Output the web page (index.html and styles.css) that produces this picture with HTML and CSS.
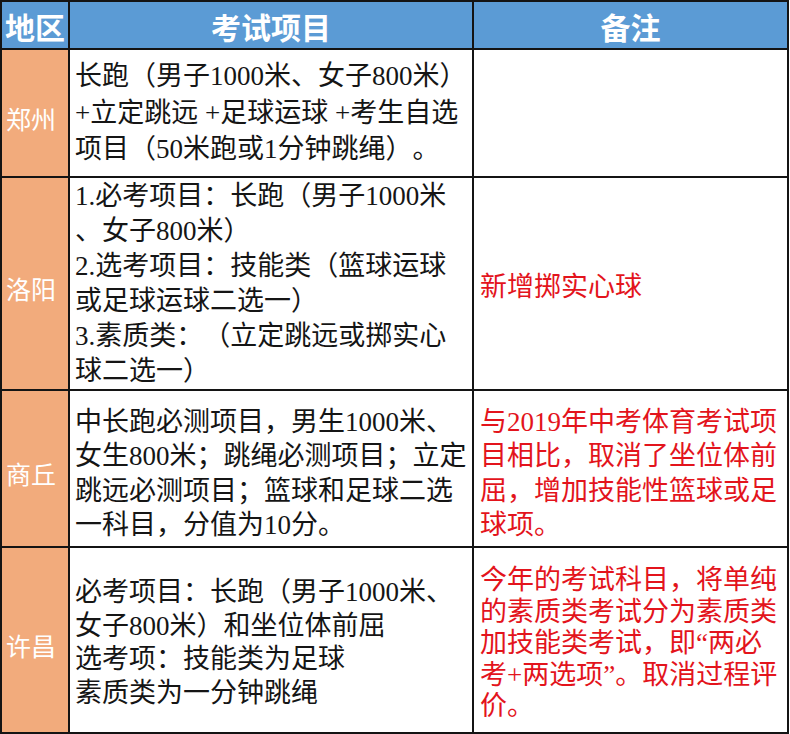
FILE: index.html
```html
<!DOCTYPE html>
<html lang="zh-CN">
<head>
<meta charset="utf-8">
<title>考试项目</title>
<link rel="stylesheet" href="styles.css">
</head>
<body>
<div class="table">
  <div class="hd">地区</div>
  <div class="hd">考试项目</div>
  <div class="hd">备注</div>

  <div class="area r1">郑州</div>
  <div class="items r1">长跑（男子1000米、女子800米）<br>+立定跳远 +足球运球 +考生自选<br>项目（50米跑或1分钟跳绳）。</div>
  <div class="note r1"></div>

  <div class="area r2">洛阳</div>
  <div class="items r2">1.必考项目：长跑（男子1000米<br>、女子800米）<br>2.选考项目：技能类（篮球运球<br>或足球运球二选一）<br>3.素质类：（立定跳远或掷实心<br>球二选一）</div>
  <div class="note r2">新增掷实心球</div>

  <div class="area r3">商丘</div>
  <div class="items r3">中长跑必测项目，男生1000米、<br>女生800米；跳绳必测项目；立定<br>跳远必测项目；篮球和足球二选<br>一科目，分值为10分。</div>
  <div class="note r3">与2019年中考体育考试项<br>目相比，取消了坐位体前<br>屈，增加技能性篮球或足<br>球项。</div>

  <div class="area r4">许昌</div>
  <div class="items r4">必考项目：长跑（男子1000米、<br>女子800米）和坐位体前屈<br>选考项：技能类为足球<br>素质类为一分钟跳绳</div>
  <div class="note r4">今年的考试科目，将单纯<br>的素质类考试分为素质类<br>加技能类考试，即“两必<br>考+两选项”。取消过程评<br>价。</div>
</div>
</body>
</html>
```

FILE: styles.css
```css
html, body {
  margin: 0;
  padding: 0;
  background: #ffffff;
}

.table {
  width: 789px;
  height: 734px;
  box-sizing: border-box;
  display: grid;
  grid-template-columns: 66px 402px 1fr;
  grid-template-rows: 46px 126px 211px 155px 184px;
  gap: 2px;
  padding: 2px;
  background: #141414;
}

.table > div {
  display: flex;
  flex-direction: column;
  justify-content: center;
  box-sizing: border-box;
  white-space: nowrap;
  overflow: hidden;
  text-spacing-trim: space-all;
}

.hd {
  background: #5b9bd5;
  color: #ffffff;
  font-family: "Noto Sans CJK SC", sans-serif;
  font-weight: 700;
  font-size: 30px;
  line-height: 40px;
  align-items: center;
  padding-top: 2px;
}

.area {
  background: #f2ab7c;
  color: #ffffff;
  font-family: "Noto Sans CJK SC", sans-serif;
  font-size: 25px;
  line-height: 32px;
  padding-left: 4px;
  padding-top: 9px;
}

.items, .note {
  background: #ffffff;
  font-family: "Liberation Serif", "Noto Sans CJK SC", serif;
  font-size: 27px;
  line-height: 35px;
}

.items {
  color: #151515;
  padding-left: 5px;
}

.note {
  color: #e3141c;
  padding-left: 6px;
}

.items.r1 {
  line-height: 36.5px;
}

.items.r3, .note.r3 {
  padding-top: 10px;
  line-height: 34.5px;
}

.note.r2 {
  padding-top: 7px;
}

.items.r4 {
  line-height: 33.5px;
  padding-top: 6px;
}

.note.r4 {
  line-height: 31.5px;
  padding-top: 8px;
}
```
